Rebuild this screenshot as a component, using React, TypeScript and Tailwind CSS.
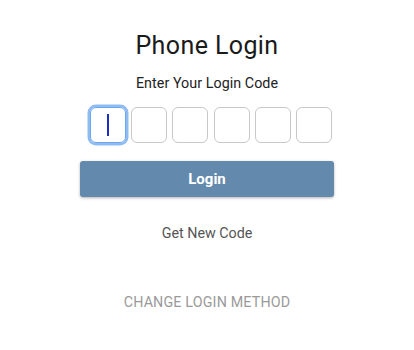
import React from "react";

export default function App() {
  const boxes = [0, 1, 2, 3, 4, 5];
  return (
    <div className="w-[414px] h-[350px] bg-white flex flex-col items-center pt-[30px]" style={{ fontFamily: "Roboto, 'Liberation Sans', sans-serif" }}>
      <div className="text-[25px] leading-8 tracking-[0.4px] text-[#1a1a1a]">Phone Login</div>
      <div className="mt-[11px] text-[14.3px] leading-5 tracking-[0.05px] text-[#222]">Enter Your Login Code</div>
      <div className="mt-[14px] w-[254px] flex pl-[10px] gap-[5.2px]">
        {boxes.map((i) =>
          i === 0 ? (
            <div key={i} className="w-9 h-9 rounded-[6px] border border-[#6fa6ea] shadow-[0_0_0_2.5px_#8ebbf1] flex items-center justify-center">
              <div className="w-[1.5px] h-[22px] bg-[#1a2fc0]" />
            </div>
          ) : (
            <div key={i} className="w-9 h-9 rounded-[6px] border border-[#c8c8c8]" />
          )
        )}
      </div>
      <button className="mt-[18px] w-[254px] h-9 rounded-[3px] bg-[#6389ad] text-white font-bold text-[15px] shadow-[0_1px_3px_rgba(0,0,0,0.3)]">
        Login
      </button>
      <div className="mt-[26px] text-[14.3px] leading-5 text-[#555]">Get New Code</div>
      <div className="mt-[49px] text-[14.3px] leading-5 tracking-[0.15px] text-[#9a9a9a]">CHANGE LOGIN METHOD</div>
    </div>
  );
}
